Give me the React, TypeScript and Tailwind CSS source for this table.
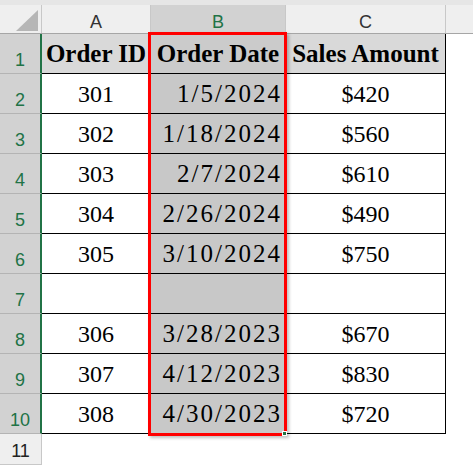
const data: [string, string, string][] = [
  ['301', '1/5/2024', '$420'],
  ['302', '1/18/2024', '$560'],
  ['303', '2/7/2024', '$610'],
  ['304', '2/26/2024', '$490'],
  ['305', '3/10/2024', '$750'],
  ['', '', ''],
  ['306', '3/28/2023', '$670'],
  ['307', '4/12/2023', '$830'],
  ['308', '4/30/2023', '$720'],
];

const serif = "font-['Liberation_Serif',serif] text-[24px] leading-none text-black";
const head = "font-['Liberation_Serif',serif] text-[25px] leading-none font-bold text-black";
const dateFont = "font-['Liberation_Serif',serif] text-[25px] leading-none tracking-[2px] text-black";
const sans = "font-['Liberation_Sans',Arial,sans-serif] text-[18px] leading-none";

const RowHead = ({ n }: { n: number }) => (
  <div
    className={`w-[42px] shrink-0 flex items-end justify-center pb-[4px] bg-[#d2d2d2] border-b border-b-[#b4b4b4] border-r-2 border-r-[#217346] text-[#217346] ${sans}`}
  >
    {n}
  </div>
);

export default function App() {
  return (
    <div className="relative w-[473px] h-[465px] overflow-hidden bg-white">
      {/* ribbon edge */}
      <div className="h-[5px] bg-[#e6e6e6]" />

      {/* column headers */}
      <div className={`flex h-[29px] bg-[#efefef] border-b border-b-[#a6a6a6] text-[#333] ${sans}`}>
        <div className="relative w-[42px] shrink-0 border-r border-r-[#c8c8c8]">
          <svg className="absolute left-[16px] top-[5px]" width="22" height="21" viewBox="0 0 22 21">
            <polygon points="22,0 22,21 0,21" fill="#b6b6b6" />
          </svg>
        </div>
        <div className="w-[109px] shrink-0 flex items-end justify-center pb-[2px] border-r border-r-[#c8c8c8]">A</div>
        <div className="w-[135px] shrink-0 flex items-end justify-center pb-[2px] bg-[#d2d2d2] text-[#217346] border-r border-r-[#c8c8c8]">
          B
        </div>
        <div className="w-[160px] shrink-0 flex items-end justify-center pb-[2px] border-r border-r-[#c8c8c8]">C</div>
        <div className="flex-1" />
      </div>

      {/* header row */}
      <div className="flex h-[40px]">
        <RowHead n={1} />
        <div className={`w-[109px] shrink-0 flex items-center justify-center bg-[#d9d9d9] border-b border-r border-black ${head}`}>
          Order ID
        </div>
        <div className={`w-[135px] shrink-0 flex items-center justify-center bg-[#cbcbcb] border-b border-r border-black ${head}`}>
          Order Date
        </div>
        <div className={`w-[160px] shrink-0 flex items-center justify-center bg-[#d9d9d9] border-b border-r border-black ${head}`}>
          Sales Amount
        </div>
        <div className="flex-1" />
      </div>

      {data.map((r, i) => (
        <div key={i} className="flex h-[40px]">
          <RowHead n={i + 2} />
          <div className={`w-[109px] shrink-0 flex items-center justify-center border-b border-r border-black ${serif}`}>{r[0]}</div>
          <div className={`w-[135px] shrink-0 flex items-center justify-end pr-[3px] bg-[#c8c8c8] border-b border-r border-black ${dateFont}`}>
            {r[1]}
          </div>
          <div className={`w-[160px] shrink-0 flex items-center justify-center border-b border-r border-black ${serif}`}>{r[2]}</div>
          <div className="flex-1" />
        </div>
      ))}

      {/* row 11 */}
      <div className="flex h-[31px]">
        <div className={`w-[42px] shrink-0 flex items-end justify-center pb-[4px] bg-[#efefef] border-b border-r border-[#c8c8c8] text-[#222] ${sans}`}>
          11
        </div>
        <div className="flex-1" />
      </div>

      {/* selection outline B1:B10 */}
      <div className="absolute left-[148px] top-[32px] w-[139px] h-[404px] border-[3px] border-[#ff0000] shadow-[2px_2px_3px_rgba(0,0,0,0.25)]">
        <div className="absolute right-[-3px] bottom-[-3px] w-[5px] h-[5px] bg-[#217346] border border-white" />
      </div>
    </div>
  );
}
